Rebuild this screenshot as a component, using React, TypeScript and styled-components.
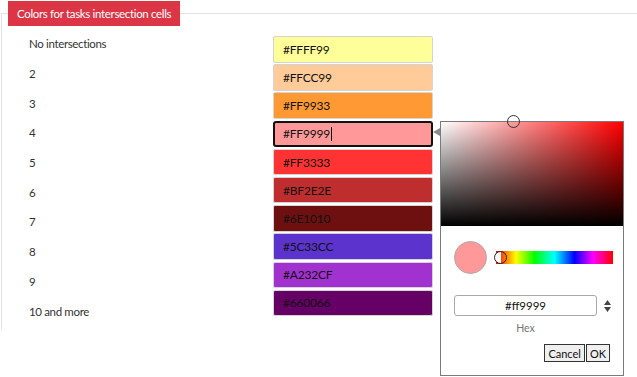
import React from "react";
import styled, { createGlobalStyle } from "styled-components";

const Global = createGlobalStyle`
  html, body { margin: 0; padding: 0; background: #fff; }
  body { font-family: Lato, "Open Sans", sans-serif; }
  * { box-sizing: border-box; }
`;

const Page = styled.div`
  position: relative;
  width: 637px;
  height: 377px;
  overflow: hidden;
  padding-top: 1px;
`;

const Tab = styled.div`
  position: relative;
  z-index: 1;
  display: inline-flex;
  align-items: center;
  margin-left: 8px;
  height: 25px;
  padding: 0 9px;
  background: #dc3545;
  color: #fff;
  font-size: 11.5px;
  letter-spacing: -0.33px;
  white-space: nowrap;
`;

const Panel = styled.div`
  margin-top: -13px;
  margin-left: 1px;
  height: 317px;
  border-top: 1px solid #e2e2e2;
  border-left: 1px solid #e2e2e2;
  display: grid;
  grid-template-columns: 244px 160px;
  padding-left: 27px;
`;

const LabelCol = styled.div`
  display: flex;
  flex-direction: column;
  padding-top: 15px;
`;

const Label = styled.div`
  height: 29.7px;
  display: flex;
  align-items: center;
  font-size: 11.5px;
  letter-spacing: -0.35px;
  color: #333;
`;

const FieldCol = styled.div`
  display: flex;
  flex-direction: column;
  gap: 1.7px;
  padding-top: 22px;
`;

const Field = styled.div<{ $bg: string; $focus?: boolean }>`
  height: 26.5px;
  display: flex;
  align-items: center;
  padding-left: ${(p) => (p.$focus ? "8px" : "9px")};
  background: ${(p) => p.$bg};
  border: ${(p) => (p.$focus ? "2px solid #111" : "1px solid #d4d4d4")};
  border-radius: ${(p) => (p.$focus ? "3px" : "2px")};
  font-size: 12px;
  letter-spacing: -0.2px;
  color: #111;
`;

const Caret = styled.span`
  display: inline-block;
  width: 1px;
  height: 14px;
  background: #000;
  margin-left: 1px;
`;

const Popup = styled.div`
  position: absolute;
  left: 440px;
  top: 121px;
  width: 184px;
  height: 255px;
  background: #fff;
  border: 1px solid #7a7a7a;
  display: flex;
  flex-direction: column;
`;

const Arrow = styled.div`
  position: absolute;
  left: -8px;
  top: 6px;
  width: 0;
  height: 0;
  border-top: 4px solid transparent;
  border-bottom: 4px solid transparent;
  border-right: 7px solid #8a8a8a;
`;

const SatArea = styled.div`
  position: relative;
  height: 104px;
  background: linear-gradient(to top, #000, rgba(0, 0, 0, 0)),
    linear-gradient(to right, #fff, #f00);
`;

const SatHandle = styled.div`
  position: absolute;
  left: 66px;
  top: -7px;
  width: 13px;
  height: 13px;
  border-radius: 50%;
  border: 1px solid #333;
`;

const HueRow = styled.div`
  display: flex;
  align-items: center;
  padding: 15px 0 0 13px;
  gap: 6px;
`;

const Preview = styled.div<{ $c: string }>`
  width: 33px;
  height: 33px;
  border-radius: 50%;
  background: ${(p) => p.$c};
  border: 1px solid #aaa;
`;

const HueBar = styled.div`
  position: relative;
  width: 117px;
  height: 13px;
  margin-left: 3px;
  background: linear-gradient(
    to right,
    #f00 0%,
    #ff0 17%,
    #0f0 33%,
    #0ff 50%,
    #00f 67%,
    #f0f 83%,
    #f00 100%
  );
`;

const HueHandle = styled.div`
  position: absolute;
  left: -2px;
  top: -0.5px;
  width: 13px;
  height: 13px;
  border-radius: 50%;
  border: 1px solid #222;
  background: linear-gradient(to right, #fff 50%, transparent 50%);
`;

const HexRow = styled.div`
  display: flex;
  align-items: center;
  padding: 21px 0 0 13px;
  gap: 7px;
`;

const HexInput = styled.div`
  width: 143px;
  height: 21px;
  border: 1px solid #a9a9a9;
  border-radius: 3px;
  display: flex;
  align-items: center;
  justify-content: center;
  font-size: 11.5px;
  color: #111;
`;

const Spinner = styled.svg`
  display: block;
`;

const HexLabel = styled.div`
  width: 143px;
  margin-left: 13px;
  margin-top: 6px;
  text-align: center;
  font-size: 10.5px;
  color: #777;
`;

const Buttons = styled.div`
  display: flex;
  justify-content: flex-end;
  gap: 1px;
  padding: 10px 13px 0 0;
`;

const Btn = styled.button`
  height: 18px;
  padding: 0 3px;
  background: #efefef;
  border: 1px solid #333;
  font-family: inherit;
  font-size: 11px;
  color: #111;
  line-height: 1;
`;

const rows = [
  { label: "No intersections", color: "#FFFF99" },
  { label: "2", color: "#FFCC99" },
  { label: "3", color: "#FF9933" },
  { label: "4", color: "#FF9999" },
  { label: "5", color: "#FF3333" },
  { label: "6", color: "#BF2E2E" },
  { label: "7", color: "#6E1010" },
  { label: "8", color: "#5C33CC" },
  { label: "9", color: "#A232CF" },
  { label: "10 and more", color: "#660066" },
];

export default function App() {
  return (
    <>
      <Global />
      <Page>
        <Tab>Colors for tasks intersection cells</Tab>
        <Panel>
          <LabelCol>
            {rows.map((r) => (
              <Label key={r.label}>{r.label}</Label>
            ))}
          </LabelCol>
          <FieldCol>
            {rows.map((r, i) => (
              <Field key={r.color} $bg={r.color} $focus={i === 3}>
                {r.color}
                {i === 3 && <Caret />}
              </Field>
            ))}
          </FieldCol>
        </Panel>
        <Popup>
          <Arrow />
          <SatArea>
            <SatHandle />
          </SatArea>
          <HueRow>
            <Preview $c="#ff9999" />
            <HueBar>
              <HueHandle />
            </HueBar>
          </HueRow>
          <HexRow>
            <HexInput>#ff9999</HexInput>
            <Spinner width="7" height="12" viewBox="0 0 7 12">
              <path d="M3.5 0 L7 5 L0 5 Z M0 7 L7 7 L3.5 12 Z" fill="#444" />
            </Spinner>
          </HexRow>
          <HexLabel>Hex</HexLabel>
          <Buttons>
            <Btn>Cancel</Btn>
            <Btn>OK</Btn>
          </Buttons>
        </Popup>
      </Page>
    </>
  );
}
